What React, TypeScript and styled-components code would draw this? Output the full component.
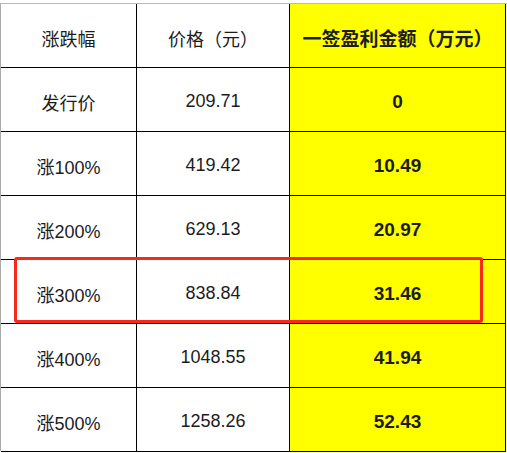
import styled, { createGlobalStyle } from "styled-components";
import { FC } from "react";

const GlobalStyle = createGlobalStyle`
    html, body {
        margin: 0;
        padding: 0;
        background: #fff;
    }
    body {
        font-family: "Liberation Sans", "Noto Sans CJK SC", sans-serif;
        color: #1c1c1c;
    }
`;

const rows = [
    { label: "发行价", price: "209.71", profit: "0" },
    { label: "涨100%", price: "419.42", profit: "10.49" },
    { label: "涨200%", price: "629.13", profit: "20.97" },
    { label: "涨300%", price: "838.84", profit: "31.46" },
    { label: "涨400%", price: "1048.55", profit: "41.94" },
    { label: "涨500%", price: "1258.26", profit: "52.43" },
];

const App: FC = () => {
    return <>
        <GlobalStyle />
        <Sheet>
            <Frame>
                <Grid>
                    <Cell>涨跌幅</Cell>
                    <Cell>价格（元）</Cell>
                    <Cell $hot>一签盈利金额（万元）</Cell>
                    {rows.map(r => (
                        <Row key={r.label}>
                            <Cell>{r.label}</Cell>
                            <Cell>{r.price}</Cell>
                            <Cell $hot>{r.profit}</Cell>
                        </Row>
                    ))}
                    <Highlight />
                </Grid>
            </Frame>
        </Sheet>
    </>
}

const Sheet = styled.div`
    width: 507px;
    height: 453px;
    padding-top: 3px;
    box-sizing: border-box;
    overflow: hidden;
`;

const Frame = styled.div`
    border-top: 1px solid #b9b9b9;
    border-left: 1px solid #ababab;
    height: 448px;
    box-sizing: border-box;
`;

const Grid = styled.div`
    position: relative;
    display: grid;
    grid-template-columns: 135px 152px 215px;
    grid-auto-rows: 63px;
    gap: 1px;
    width: 505px;
    padding: 0 1px 1px 0;
    box-sizing: border-box;
    background: #000;
`;

const Row = styled.div`
    display: contents;
`;

const Cell = styled.div<{ $hot?: boolean }>`
    display: flex;
    align-items: center;
    justify-content: center;
    padding-top: 4px;
    box-sizing: border-box;
    background: ${p => p.$hot ? "#ffff00" : "#fff"};
    font-size: ${p => p.$hot ? "19px" : "18px"};
    font-weight: ${p => p.$hot ? 700 : 400};
    white-space: nowrap;
`;

const Highlight = styled.div`
    position: absolute;
    left: 13px;
    top: 253px;
    width: 469px;
    height: 66px;
    border: 3px solid #f7281c;
    border-radius: 3px;
    box-sizing: border-box;
    pointer-events: none;
`;

export default App;
